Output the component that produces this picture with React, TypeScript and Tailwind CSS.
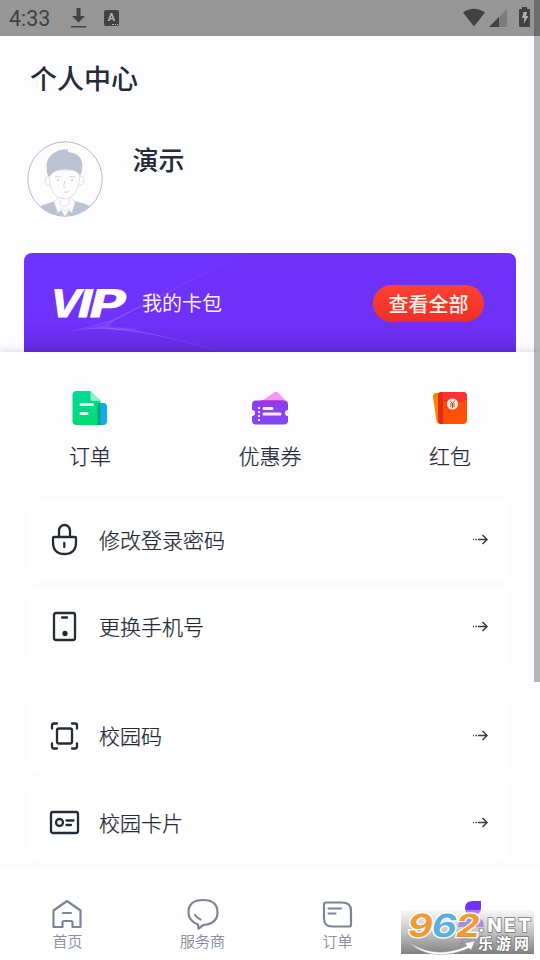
import type { ReactNode } from "react";

const INK = "#252a37";
const SLATE = "#7b8499";

function StatusBar() {
  return (
    <header className="flex h-9 shrink-0 items-center bg-[#969697] pl-[9px] pr-[9px] text-[#424243]">
      <span className="w-[61px] pt-0.5 font-[Roboto,sans-serif] text-[21.500px] leading-9">4:33</span>
      <svg width="16" height="22" viewBox="0 0 16 22" fill="currentColor">
        <path d="M6.500 1h4v8h4.500L8.500 15.500 2 9h4.500zM1 19h15v1.600H1z" />
      </svg>
      <span className="relative ml-[18px] flex h-4 w-[15px] items-center justify-center rounded-[2px] bg-[#424243] font-[Roboto,sans-serif] text-[11px] font-bold text-[#b4b4b5]">
        A
        <i className="absolute bottom-[1px] right-[1px] w-[6px] border-b border-dotted border-[#b4b4b5]" />
      </span>
      <svg className="ml-auto" width="68" height="22" viewBox="0 0 68 22" fill="currentColor">
        <path d="M0 5.500Q11-2 22 5.500L11 19.500z" />
        <path d="M26 20L44 2v18z" opacity=".3" />
        <path d="M26 20l10-10v10z" />
        <path d="M59 0h5v2h2q1 0 1 1v16q0 1-1 1h-9q-1 0-1-1V3q0-1 1-1h2z" />
        <path d="M60.500 5H64l-1 4h2.500l-5 8 1-6H59z" fill="#b0b0b1" />
      </svg>
    </header>
  );
}

function Avatar() {
  return (
    <svg width="76" height="76" viewBox="0 0 76 76" fill="none" stroke="#d5d9e2" strokeWidth="0.8">
      <defs>
        <clipPath id="avatar">
          <circle cx="38" cy="38" r="37" />
        </clipPath>
      </defs>
      <circle cx="38" cy="38" r="37.200" fill="#fdfdff" stroke="#b5bac7" strokeWidth="1" />
      <g clipPath="url(#avatar)">
        <path d="M12 66q8-4 17-6h18q10 2 18 6v11H12z" fill="#bbc2d1" stroke="none" />
        <path d="M32 56h11l5 5-3 11-3-3-4 7-4-7-3 3-4-11z" fill="#fdfdff" />
        <path d="M33 54v9q4 5 9 0v-9" fill="#fdfdff" />
        <path d="M34 67l4 3 4-3" />
      </g>
      <path d="M23 36q-5-2-5 3 0 6 6 5M52 36q5-2 5 3 0 6-6 5" fill="#fdfdff" />
      <path d="M22 29q0 18 5 24 5 5 11 5t10-6q5-7 5-23z" fill="#fdfdff" />
      <path
        d="M21 35Q18 26 21 18q4-6 8-7 2-2 5-2l5-1-1 2 3-2v3q12 1 14 10 1 8-2 14-2-5-9-6-15-3-21 6z"
        fill="#bbc2d1"
        stroke="none"
      />
      <path d="M28 36q4-1 6 0m8 0q3-1 6 0M38 40q-3 8 1 6M37 51q4 1 5-1" stroke="#c4c9d5" />
      <g fill="#c4c9d5" stroke="none">
        <circle cx="31" cy="39" r="1" />
        <circle cx="45" cy="39" r="1" />
      </g>
    </svg>
  );
}

function VipCard() {
  return (
    <section className="relative mx-6 flex h-[99px] items-center overflow-hidden rounded-t-[8px] bg-linear-to-b from-[#7133ff] via-[#7032fd] via-70% to-[#642add] pl-7 pr-8 pt-0.5">
      <svg className="absolute inset-0" width="492" height="99" viewBox="0 0 492 99" fill="none">
        <defs>
          <linearGradient id="beam" x1="40" y1="0" x2="230" y2="0" gradientUnits="userSpaceOnUse">
            <stop stopColor="#b293ff" stopOpacity="0" />
            <stop offset=".28" stopColor="#b293ff" stopOpacity=".55" />
            <stop offset=".6" stopColor="#b293ff" stopOpacity=".18" />
            <stop offset="1" stopColor="#b293ff" stopOpacity="0" />
          </linearGradient>
        </defs>
        <path d="M40 79Q65 76 88 68L220 0H492V99H190Q125 75 80 75 60 75 40 79z" fill="#6b2ef5" opacity=".25" />
        <path d="M40 79Q65 75 88 68L220 0M40 79Q60 75 80 75 125 77 190 97" stroke="url(#beam)" />
        <path d="M55 77Q74 74 90 68q-5 5-3 6 18 0 32 4-32-4-64-1z" fill="#a47eff" opacity=".25" />
      </svg>
      <svg className="relative overflow-visible" width="76" height="34" viewBox="0 0 76 34">
        <g
          fill="white"
          stroke="white"
          strokeWidth=".8"
          transform="translate(7.500 0) skewX(-14)"
          className="font-[Inter,sans-serif] text-[38px] font-bold"
        >
          <text x="-5" y="30" textLength="31" lengthAdjust="spacingAndGlyphs">
            V
          </text>
          <text x="23.500" y="30" textLength="14" lengthAdjust="spacingAndGlyphs">
            I
          </text>
          <text x="35" y="30" textLength="36" lengthAdjust="spacingAndGlyphs">
            P
          </text>
        </g>
      </svg>
      <span className="relative -mt-0.5 ml-[14px] text-[20px] text-[#f5efff]">我的卡包</span>
      <button className="relative ml-auto h-[37px] w-[111px] rounded-full bg-linear-to-b from-[#ff4133] to-[#ec3023] text-[20px] font-medium leading-[35px] text-[#fff0ec]">
        查看全部
      </button>
    </section>
  );
}

function OrderIcon() {
  return (
    <svg width="36" height="36" viewBox="0 0 36 36">
      <defs>
        <linearGradient id="green" x2="0" y2="1">
          <stop stopColor="#07d99a" />
          <stop offset="1" stopColor="#00dc70" />
        </linearGradient>
      </defs>
      <rect x="20" y="13" width="15" height="22" rx="4" fill="#10a9f4" />
      <path d="M4.500 1h14l10 10v24h-24q-4 0-4-4V5q0-4 4-4z" fill="url(#green)" />
      <path d="M25.500 16q0-3 3-3v22h-3z" fill="#00a47d" />
      <path d="M18.500 1l10 10h-8q-2 0-2-2z" fill="#8df0c5" />
      <path d="M9 14.500h11.500M9 23.500h6" stroke="#f0fff5" strokeWidth="3" strokeLinecap="round" />
    </svg>
  );
}

function CouponIcon() {
  return (
    <svg width="38" height="36" viewBox="0 0 38 36">
      <defs>
        <linearGradient id="violet" x2="0" y2="1">
          <stop stopColor="#8c3df0" />
          <stop offset="1" stopColor="#8247f5" />
        </linearGradient>
      </defs>
      <path d="M6 12l6-2L23 2.500q2-1.500 4 0L35 11z" fill="#f29cf1" />
      <path
        d="M5 10.500h28q4 0 4 4v5.500a3 3 0 0 0 0 6v4.500q0 4-4 4H5q-4 0-4-4V26a3 3 0 0 0 0-6v-5.500q0-4 4-4z"
        fill="url(#violet)"
      />
      <path d="M7 12.500l3-2h22l1 2z" fill="#b12bd4" />
      <path d="M8 17v15" stroke="#f4dcff" strokeWidth="2" strokeDasharray="2 2" />
      <path d="M13 18.500h8M13 24h16" stroke="#fff0ff" strokeWidth="3" strokeLinecap="round" />
    </svg>
  );
}

function PacketIcon() {
  return (
    <svg width="36" height="36" viewBox="0 0 36 36">
      <defs>
        <linearGradient id="orange" x2="1" y2="1">
          <stop stopColor="#ff4612" />
          <stop offset="1" stopColor="#ff5600" />
        </linearGradient>
      </defs>
      <path d="M4 3h12v31H8q-3 0-3.500-3L1 7q0-4 3-4z" fill="#ff8100" />
      <rect x="6" y="2" width="29" height="32" rx="4" fill="url(#orange)" />
      <path d="M10 2h21q4 0 4 4v4q-14 5-29 0V6q0-4 4-4z" fill="#ff3034" />
      <path d="M10 2q1 0 1 2v30h-1q-4 0-4-4V6q0-4 4-4z" fill="#e52c0a" />
      <circle cx="20.500" cy="14" r="5.600" fill="#fff1e4" />
      <path d="M18 10.500l2.500 3 2.500-3M20.500 13.500v4.500M18 14h5M18 16h5" stroke="#c54a28" fill="none" />
    </svg>
  );
}

const shortcuts = [
  { label: "订单", icon: <OrderIcon /> },
  { label: "优惠券", icon: <CouponIcon /> },
  { label: "红包", icon: <PacketIcon /> },
];

function LineIcon({ children }: { children: ReactNode }) {
  return (
    <svg
      width="32"
      height="34"
      viewBox="0 0 32 34"
      fill="none"
      stroke={INK}
      strokeWidth="2.300"
      strokeLinecap="round"
      strokeLinejoin="round"
    >
      {children}
    </svg>
  );
}

const groups = [
  [
    {
      label: "修改登录密码",
      icon: (
        <LineIcon>
          <path d="M11 14V7.500a5.500 5.500 0 0 1 11 0V14M6 14h21q1 0 1 1v4q0 12-11.500 12T5 19v-4q0-1 1-1zM16.300 20v4" />
        </LineIcon>
      ),
    },
    {
      label: "更换手机号",
      icon: (
        <LineIcon>
          <rect x="6" y="3" width="21" height="27" rx="2" />
          <path d="M14 7.500h5" />
          <circle cx="17" cy="23.500" r="1.500" fill={INK} />
        </LineIcon>
      ),
    },
  ],
  [
    {
      label: "校园码",
      icon: (
        <LineIcon>
          <rect x="9" y="9.500" width="15" height="15" rx="2" />
          <path d="M4 9.500v-3q0-2 2-2h3M24 4.500h3q2 0 2 2v3M4 24.500v3q0 2 2 2h3M24 29.500h3q2 0 2-2v-3" />
        </LineIcon>
      ),
    },
    {
      label: "校园卡片",
      icon: (
        <LineIcon>
          <rect x="3" y="6" width="27" height="21" rx="2" />
          <circle cx="11.500" cy="16.500" r="3.500" />
          <path d="M18.500 14.500h7M18.500 19H23" />
        </LineIcon>
      ),
    },
  ],
];

function MenuRow({ label, icon }: { label: string; icon: ReactNode }) {
  return (
    <li className="flex h-[79px] items-center rounded-xl bg-white pl-[18px] pr-[21px]">
      {icon}
      <span className="ml-[19px] text-[21px] font-light [-webkit-text-stroke:0.25px]">{label}</span>
      <svg className="ml-auto" width="17" height="12" viewBox="0 0 17 12" fill="none" stroke="#373b45" strokeWidth="1.500">
        <path d="M1 5.500h1M3.500 5.500h1.500M6 5.500h9M10.500 1L15 5.500 10.500 10" />
      </svg>
    </li>
  );
}

function NavIcon({ children }: { children: ReactNode }) {
  return (
    <svg
      width="34"
      height="34"
      viewBox="0 0 34 34"
      fill="none"
      stroke={SLATE}
      strokeWidth="2.200"
      strokeLinecap="round"
      strokeLinejoin="round"
    >
      {children}
    </svg>
  );
}

const tabs = [
  {
    label: "首页",
    icon: (
      <NavIcon>
        <path d="M2.500 13.500L16 4l13.500 9.500V30h-8v-4.500q0-1.500-1.500-1.500h-7q-1.500 0-1.500 1.500V30h-9zM12 16h8" />
      </NavIcon>
    ),
  },
  {
    label: "服务商",
    icon: (
      <NavIcon>
        <path d="M12 27.500Q2.500 24 2.500 15.500 2.500 3 17 3t14.500 12.500q0 11-14 12.500L12.500 31.500zM9 18q2 3 5.500 4.500" />
      </NavIcon>
    ),
  },
  {
    label: "订单",
    icon: (
      <NavIcon>
        <path d="M5 5.500h16q9 0 9 8v14q0 2-2 2H11q-8 0-8-8v-14q0-2 2-2zM7.500 11.500h12.500M7.500 16.500h7" />
      </NavIcon>
    ),
  },
  {
    label: "我的",
    icon: (
      <NavIcon>
        <g fill="#7332fb" stroke="none">
          <path d="M9 11q0-7 8-7h8v7q0 7-8 7T9 11z" />
          <path d="M2 30q0-9 9-9h10q7 0 7 9z" />
        </g>
      </NavIcon>
    ),
  },
];

function SiteStamp() {
  return (
    <div className="absolute bottom-1.5 right-1.5 h-11 w-[133px] bg-linear-to-b from-[#eeeeee]/40 via-[#b5b5b5]/80 to-[#818181]">
      <svg className="overflow-visible" width="133" height="44" viewBox="0 0 133 44">
        <g
          className="font-[Inter,sans-serif] text-[32px] font-bold"
          stroke="white"
          strokeWidth="2.500"
          paintOrder="stroke"
          transform="translate(5 0) skewX(-10)"
        >
          <text x="5" y="27" fill="#f09a36" textLength="25" lengthAdjust="spacingAndGlyphs">
            9
          </text>
          <text x="29" y="27" fill="#5baee0" textLength="25" lengthAdjust="spacingAndGlyphs">
            6
          </text>
          <text x="53" y="27" fill="#f09a36" textLength="24" lengthAdjust="spacingAndGlyphs">
            2
          </text>
        </g>
        <path d="M7 32Q35 50 66 36l-2-3 10-2-4 9-2-2Q32 54 7 32z" fill="white" stroke="#9a9a9a" strokeWidth=".5" />
        <g fill="white" stroke="#777777" strokeWidth="1.500" paintOrder="stroke">
          <text
            x="77"
            y="22"
            className="font-[Inter,sans-serif] text-[19px] font-extrabold"
            textLength="53"
            lengthAdjust="spacing"
          >
            .NET
          </text>
          <text x="77" y="39" className="text-[15px] font-bold" textLength="51">
            乐游网
          </text>
        </g>
      </svg>
    </div>
  );
}

export default function App() {
  return (
    <div className="relative flex h-[960px] w-[540px] flex-col overflow-hidden bg-[#fdfdff] font-['Noto_Sans_CJK_SC',sans-serif] text-[#252a37]">
      <StatusBar />
      <h1 className="ml-[30px] mt-[22px] text-[27px] font-medium leading-10">个人中心</h1>
      <section className="ml-[26.500px] mt-[43px] flex h-[112px] items-start">
        <Avatar />
        <span className="ml-[30px] text-[26px] font-medium leading-9">演示</span>
      </section>
      <VipCard />

      <main className="relative flex-1 bg-[#fdfdff] shadow-[0_-2px_7px_rgba(0,0,0,0.12)]">
        <div className="grid h-[148px] grid-cols-3 pt-[38px]">
          {shortcuts.map((item) => (
            <div key={item.label} className="flex flex-col items-center">
              {item.icon}
              <span className="mt-[13px] text-[21px] font-light leading-8 [-webkit-text-stroke:0.25px]">
                {item.label}
              </span>
            </div>
          ))}
        </div>
        <div className="flex flex-col gap-[30px] px-[30px]">
          {groups.map((rows) => (
            <ul key={rows[0].label} className="flex flex-col gap-2">
              {rows.map((row) => (
                <MenuRow key={row.label} {...row} />
              ))}
            </ul>
          ))}
        </div>
      </main>

      <nav className="relative grid h-[92px] shrink-0 grid-cols-4 bg-white pt-[29px]">
        {tabs.map((tab) => (
          <div key={tab.label} className="flex flex-col items-center text-[#7b8499] last:text-[#7332fb]">
            {tab.icon}
            <span className="-mt-px text-[15px] font-light leading-[22px] [-webkit-text-stroke:0.2px]">
              {tab.label}
            </span>
          </div>
        ))}
      </nav>
      <SiteStamp />
      <div className="absolute right-0 top-0 h-[682px] w-1.5 bg-black/28" />
    </div>
  );
}
